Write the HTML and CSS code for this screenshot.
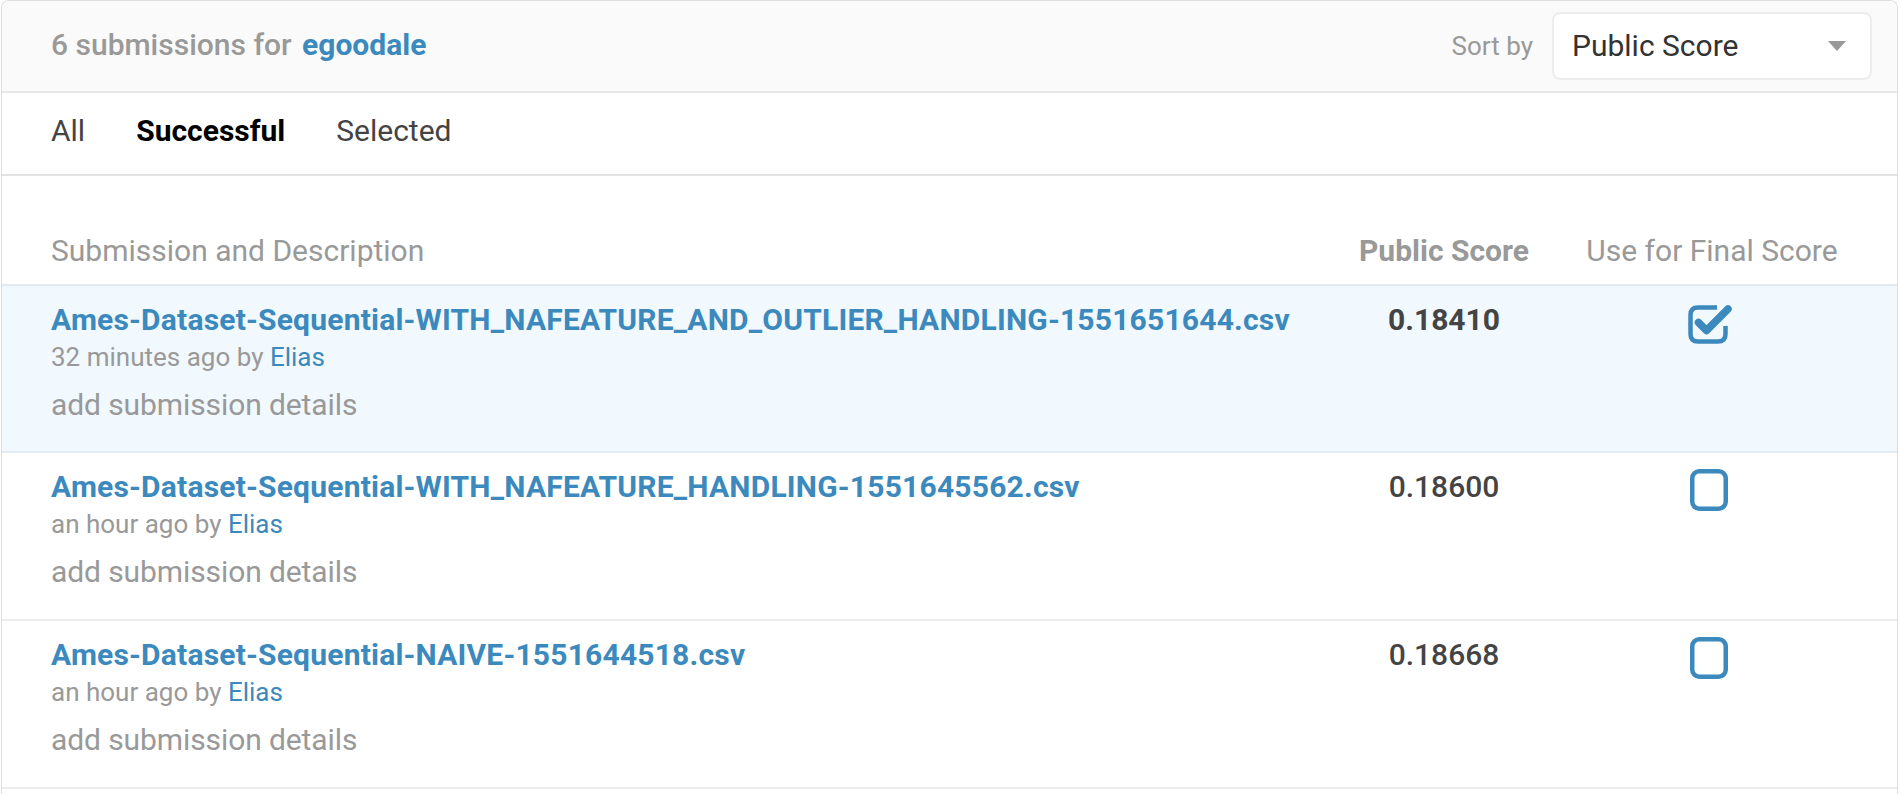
FILE: index.html
```html
<!DOCTYPE html>
<html lang="en">
<head>
<meta charset="utf-8">
<title>Submissions</title>
<link rel="stylesheet" href="styles.css">
</head>
<body>
<div class="panel">
  <div class="topbar">
    <div class="count">6 submissions for <a class="user" href="#">egoodale</a></div>
    <div class="sort">
      <span class="sort-label">Sort by</span>
      <div class="select">
        <span>Public Score</span>
        <span class="caret"></span>
      </div>
    </div>
  </div>
  <div class="tabs">
    <span class="tab">All</span>
    <span class="tab active">Successful</span>
    <span class="tab">Selected</span>
  </div>
  <div class="grid head">
    <div class="cell">Submission and Description</div>
    <div class="cell center strong">Public Score</div>
    <div class="cell center">Use for Final Score</div>
  </div>
  <div class="grid row selected">
    <div class="desc">
      <a class="file" href="#">Ames-Dataset-Sequential-WITH_NAFEATURE_AND_OUTLIER_HANDLING-1551651644.csv</a>
      <div class="meta">32 minutes ago by <a href="#">Elias</a></div>
      <div class="details">add submission details</div>
    </div>
    <div class="score bold">0.18410</div>
    <div class="pick">
      <svg class="chk" width="46" height="44" viewBox="0 0 46 44">
        <path d="M29 7.5 H10 Q2.5 7.5 2.5 15 V34 Q2.5 41.5 10 41.5 H30 Q37.5 41.5 37.5 34 V26" fill="none" stroke="#3b89bd" stroke-width="4.5"/>
        <path d="M10.5 22.5 L18.5 30.5 L40 9" fill="none" stroke="#3b89bd" stroke-width="7.5" stroke-linecap="round" stroke-linejoin="round"/>
      </svg>
    </div>
  </div>
  <div class="grid row">
    <div class="desc">
      <a class="file" href="#">Ames-Dataset-Sequential-WITH_NAFEATURE_HANDLING-1551645562.csv</a>
      <div class="meta">an hour ago by <a href="#">Elias</a></div>
      <div class="details">add submission details</div>
    </div>
    <div class="score">0.18600</div>
    <div class="pick">
      <svg class="box" width="38" height="42" viewBox="0 0 38 42">
        <rect x="2.25" y="2.25" width="33.5" height="37.5" rx="7" fill="none" stroke="#3b89bd" stroke-width="4.5"/>
      </svg>
    </div>
  </div>
  <div class="grid row">
    <div class="desc">
      <a class="file" href="#">Ames-Dataset-Sequential-NAIVE-1551644518.csv</a>
      <div class="meta">an hour ago by <a href="#">Elias</a></div>
      <div class="details">add submission details</div>
    </div>
    <div class="score">0.18668</div>
    <div class="pick">
      <svg class="box" width="38" height="42" viewBox="0 0 38 42">
        <rect x="2.25" y="2.25" width="33.5" height="37.5" rx="7" fill="none" stroke="#3b89bd" stroke-width="4.5"/>
      </svg>
    </div>
  </div>
</div>
</body>
</html>
```
FILE: styles.css
```css
* { box-sizing: border-box; }
html, body { margin: 0; padding: 0; background: #fff; }
body {
  font-family: Roboto, "Liberation Sans", Arial, sans-serif;
  color: #444;
  font-size: 30px;
  line-height: 36px;
}
a { text-decoration: none; color: #3b89bd; }

.panel {
  margin: 0 2px 0 1px;
  border: 1px solid #dedede;
  border-bottom: none;
  border-radius: 8px 8px 0 0;
  overflow: hidden;
  height: 794px;
}

.topbar {
  height: 92px;
  background: #fafafa;
  border-bottom: 2px solid #e8e8e8;
  display: flex;
  align-items: center;
  justify-content: space-between;
  padding: 0 25px 0 49px;
}
.count {
  font-weight: 500;
  color: #999;
  padding-bottom: 2px;
}
.count .user { font-weight: 700; margin-left: 3px; }

.sort { display: flex; align-items: center; gap: 19px; }
.sort-label { font-size: 26px; color: #999; }
.select {
  width: 320px;
  height: 68px;
  background: #fff;
  border: 2px solid #ececec;
  border-radius: 8px;
  display: flex;
  align-items: center;
  justify-content: space-between;
  padding: 0 24px 0 18px;
  color: #333;
}
.caret {
  width: 0; height: 0;
  border-left: 9px solid transparent;
  border-right: 9px solid transparent;
  border-top: 10px solid #999;
}

.tabs {
  height: 83px;
  border-bottom: 2px solid #e3e3e3;
  display: flex;
  gap: 51px;
  padding: 20px 0 0 49px;
}
.tab { color: #444; }
.tab.active { color: #000; font-weight: 700; }

.grid {
  display: grid;
  grid-template-columns: 1fr 222px 314px;
  padding: 0 28px 0 49px;
}
.head {
  padding-top: 57px;
  padding-bottom: 15px;
  color: #999;
  border-bottom: 2px solid #e3ebf2;
}
.center { text-align: center; }
.strong { font-weight: 700; }

.row {
  height: 168px;
  border-bottom: 2px solid #ebebeb;
  padding-top: 16px;
}
.row.selected { background: #f1f8fe; border-bottom-color: #e3ebf2; height: 167px; }

.desc { display: flex; flex-direction: column; align-items: flex-start; }
.file { font-weight: 700; letter-spacing: 0.2px; }
.meta { font-size: 26px; color: #999; line-height: 36px; margin-top: 1px; }
.details { color: #999; margin-top: 12px; letter-spacing: -0.1px; }

.score { text-align: center; font-weight: 500; color: #444; }
.score.bold { font-weight: 700; }

.pick { display: flex; justify-content: center; padding-top: 0; }
.pick svg { display: block; }
.pick .chk { margin-left: -2px; margin-top: -2px; }
.pick .box { margin-left: -6px; }
```
